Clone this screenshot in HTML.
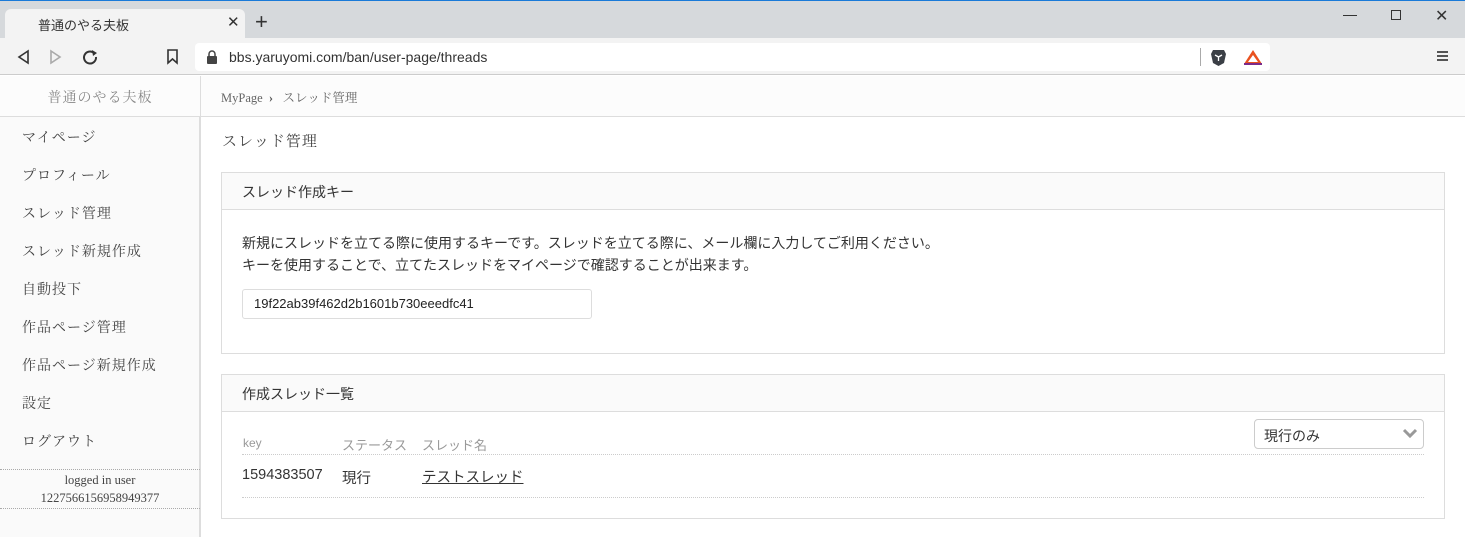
<!DOCTYPE html>
<html><head><meta charset="utf-8"><style>
*{margin:0;padding:0;box-sizing:border-box}
body{width:1465px;height:537px;overflow:hidden;position:relative;background:#fff;font-family:"Liberation Sans","Noto Sans CJK JP",sans-serif;color:#333}
.a{position:absolute}
.serif{font-family:"Liberation Serif","Noto Serif CJK JP",serif}
.nav{left:22px;font-size:14px;color:#444;letter-spacing:1px}
.card{background:#fff;border:1px solid #ddd}
.ch{background:#fafafa;border-bottom:1px solid #ddd}
</style></head><body>
<div class="a" style="left:0;top:0;width:1465px;height:38px;background:#d6d9dc;border-top:1px solid #1a7ad8"></div>
<div class="a" style="left:5px;top:9px;width:240px;height:29px;background:#f3f3f3;border-radius:6px 6px 0 0"></div>
<div class="a" style="left:38px;top:15px;font-size:13px;color:#333">普通のやる夫板</div>
<div class="a" style="left:227px;top:13px;font-size:15px;color:#333">✕</div>
<div class="a" style="left:255px;top:9px;font-size:22px;color:#333;line-height:26px">+</div>
<div class="a" style="left:1343px;top:15px;width:14px;height:1px;background:#333"></div>
<div class="a" style="left:1391px;top:10px;width:10px;height:10px;border:1px solid #333"></div>
<div class="a" style="left:1435px;top:6px;font-size:16px;color:#333">✕</div>
<div class="a" style="left:0;top:38px;width:1465px;height:37px;background:#f3f3f3;border-bottom:1px solid #ccc"></div>
<svg class="a" style="left:14px;top:48px" width="100" height="18"><path d="M14 3 L5 9 L14 15 Z" fill="none" stroke="#333" stroke-width="1.6"/><path d="M37 3 L46 9 L37 15 Z" fill="none" stroke="#aaa" stroke-width="1.6"/><path d="M80 5 A6 6 0 1 0 82 9" fill="none" stroke="#333" stroke-width="2"/><path d="M78 2 L83 5 L79 8Z" fill="#333"/></svg>
<svg class="a" style="left:166px;top:49px" width="14" height="16"><path d="M2 1 H11 V14 L6.5 10 L2 14 Z" fill="none" stroke="#333" stroke-width="1.6"/></svg>
<div class="a" style="left:195px;top:43px;width:1075px;height:28px;background:#fff;border-radius:4px"></div>
<svg class="a" style="left:206px;top:50px" width="12" height="14"><path d="M3 6 V4 A3 3 0 0 1 9 4 V6" fill="none" stroke="#444" stroke-width="1.5"/><rect x="1" y="6" width="10" height="8" rx="1" fill="#444"/></svg>
<div class="a" style="left:229px;top:49px;font-size:14px;color:#333">bbs.yaruyomi.com/ban/user-page/threads</div>
<div class="a" style="left:1200px;top:48px;width:1px;height:18px;background:#aaa"></div>
<svg class="a" style="left:1210px;top:48px" width="17" height="19"><path d="M3 2 H14 L16 6 L14 15 L8.5 18 L3 15 L1 6Z" fill="#3b3f46"/><path d="M5 7 L8.5 9 L12 7 M8.5 9 V13" stroke="#fff" stroke-width="1.3" fill="none"/></svg>
<svg class="a" style="left:1243px;top:49px" width="20" height="16"><path d="M10 1 L19 15 H1Z" fill="#e9511f"/><path d="M10 6 L15 13 H5Z" fill="#fff"/><path d="M1 15 H19" stroke="#7b2a8a" stroke-width="2"/></svg>
<div class="a" style="left:1437px;top:51px;width:11px;height:2px;background:#555;box-shadow:0 4px 0 #555,0 8px 0 #555"></div>

<div class="a" style="left:0;top:76px;width:200px;height:461px;background:#fafafa;border-right:1px solid #ddd"></div>
<div class="a" style="left:0;top:76px;width:1465px;height:41px;background:#fcfcfc;border-bottom:1px solid #ddd"></div>
<div class="a" style="left:200px;top:76px;width:1px;height:461px;background:#ddd"></div>
<div class="a serif" style="left:0;top:87px;width:200px;text-align:center;font-size:14px;color:#888;letter-spacing:1px">普通のやる夫板</div>
<div class="a serif" style="left:221px;top:88px;font-size:12.5px;color:#666">MyPage &nbsp;<b style="color:#555">›</b>&nbsp;&nbsp; スレッド管理</div>
<div class="a serif nav" style="top:127px">マイページ</div>
<div class="a serif nav" style="top:165px">プロフィール</div>
<div class="a serif nav" style="top:203px">スレッド管理</div>
<div class="a serif nav" style="top:241px">スレッド新規作成</div>
<div class="a serif nav" style="top:279px">自動投下</div>
<div class="a serif nav" style="top:317px">作品ページ管理</div>
<div class="a serif nav" style="top:355px">作品ページ新規作成</div>
<div class="a serif nav" style="top:393px">設定</div>
<div class="a serif nav" style="top:431px">ログアウト</div>
<div class="a" style="left:0;top:469px;width:200px;height:40px;border-top:1px dotted #aaa;border-bottom:1px dotted #aaa"></div>
<div class="a serif" style="left:0;top:471px;width:200px;text-align:center;font-size:12.5px;color:#444;line-height:18px">logged in user<br>1227566156958949377</div>

<div class="a serif" style="left:222px;top:130px;font-size:15px;color:#444;letter-spacing:1px">スレッド管理</div>
<div class="a card" style="left:221px;top:172px;width:1224px;height:182px"></div>
<div class="a ch" style="left:222px;top:173px;width:1222px;height:37px"></div>
<div class="a" style="left:242px;top:182px;font-size:14px;color:#333">スレッド作成キー</div>
<div class="a" style="left:242px;top:232px;font-size:14px;color:#333;line-height:22px;white-space:nowrap">新規にスレッドを立てる際に使用するキーです。スレッドを立てる際に、メール欄に入力してご利用ください。<br>キーを使用することで、立てたスレッドをマイページで確認することが出来ます。</div>
<div class="a" style="left:242px;top:289px;width:350px;height:30px;border:1px solid #ddd;border-radius:3px;padding:6px 11px;font-size:13px;color:#222">19f22ab39f462d2b1601b730eeedfc41</div>

<div class="a card" style="left:221px;top:374px;width:1224px;height:145px"></div>
<div class="a ch" style="left:222px;top:375px;width:1222px;height:37px"></div>
<div class="a" style="left:242px;top:384px;font-size:14px;color:#333">作成スレッド一覧</div>
<div class="a" style="left:1254px;top:419px;width:170px;height:30px;border:1px solid #ccc;border-radius:4px;padding:6px 9px;font-size:14px;color:#333">現行のみ</div>
<svg class="a" style="left:1402px;top:428px" width="16" height="12"><path d="M2 2 L8 8 L14 2" fill="none" stroke="#999" stroke-width="3"/></svg>
<div class="a" style="left:243px;top:436px;font-size:12px;color:#999">key</div>
<div class="a" style="left:342px;top:435px;font-size:13px;color:#999">ステータス</div>
<div class="a" style="left:422px;top:435px;font-size:13px;color:#999">スレッド名</div>
<div class="a" style="left:242px;top:454px;width:1182px;border-top:1px dotted #ccc"></div>
<div class="a" style="left:242px;top:467px;font-size:14.5px;color:#333">1594383507</div>
<div class="a" style="left:342px;top:467px;font-size:14.5px;color:#333">現行</div>
<div class="a" style="left:422px;top:466px;font-size:14.5px;color:#333;text-decoration:underline">テストスレッド</div>
<div class="a" style="left:242px;top:497px;width:1182px;border-top:1px dotted #ccc"></div>
</body></html>
